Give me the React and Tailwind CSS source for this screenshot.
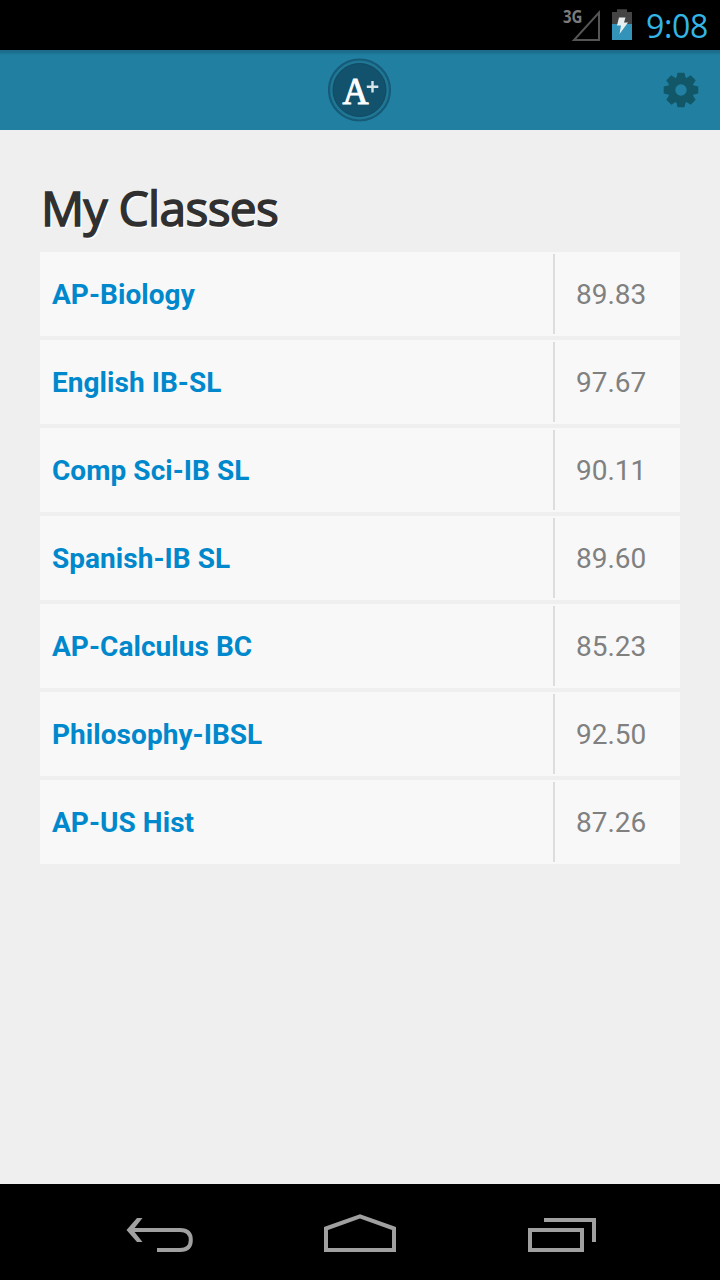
const classes = [
  { name: "AP-Biology", grade: "89.83" },
  { name: "English IB-SL", grade: "97.67" },
  { name: "Comp Sci-IB SL", grade: "90.11" },
  { name: "Spanish-IB SL", grade: "89.60" },
  { name: "AP-Calculus BC", grade: "85.23" },
  { name: "Philosophy-IBSL", grade: "92.50" },
  { name: "AP-US Hist", grade: "87.26" },
];

function StatusBar() {
  return (
    <div className="flex h-[50px] shrink-0 items-start justify-end bg-black">
      <svg className="mr-[10px] h-[50px] w-[40px]" viewBox="562 0 40 50">
        <text x="563" y="23" fontSize="17" fontWeight="700" fill="#7b7b7b" textLength="19.5" lengthAdjust="spacingAndGlyphs" fontFamily="Open Sans, sans-serif">3G</text>
        <path d="M574 40H599V12.500Z" fill="none" stroke="#555" strokeWidth="2" />
      </svg>
      <svg className="mr-[14px] h-[50px] w-[20px]" viewBox="612 0 20 50">
        <path d="M612 12h5V9.300h10V12h5v12h-20Z" fill="#444" />
        <path d="M612 24h20v16h-20Z" fill="#3393b8" />
        <path d="M619 17.500h6.500l-1.500 5h4L619.500 34l1.500-8.500h-4Z" fill="#e8eef0" />
      </svg>
      <div className="mr-[11px] h-[50px] w-[63px] whitespace-nowrap font-['Open_Sans',sans-serif] text-[32px] leading-[51px] tracking-[-0.3px] text-[#33b5e5]">9:08</div>
    </div>
  );
}

function Logo() {
  return (
    <svg className="col-start-2 size-[64px]" viewBox="0 0 64 64">
      <circle cx="31.500" cy="32" r="30.500" fill="#1f7795" stroke="#155b77" strokeWidth="2.200" />
      <circle cx="31.500" cy="32" r="26.500" fill="#12526d" stroke="#114a62" strokeWidth="1" />
      <text x="14.500" y="45.600" fontSize="37" fill="#fff" stroke="#fff" strokeWidth="1.100" textLength="26" lengthAdjust="spacingAndGlyphs" fontFamily="Liberation Serif, serif">A</text>
      <path d="M44.500 23v11.500M38.800 28.700h11.500" stroke="#d8e5ea" strokeWidth="2.400" />
    </svg>
  );
}

function Gear() {
  return (
    <svg className="col-start-3 mr-[21px] size-[36px] justify-self-end" viewBox="-18 -18 36 36">
      {[0, 45, 90, 135, 180, 225, 270, 315].map((a) => (
        <path key={a} d="M-5.200 -10L-3.500 -17.300H3.500L5.200 -10Z" fill="#125767" transform={`rotate(${a})`} />
      ))}
      <circle r="9.400" fill="none" stroke="#125767" strokeWidth="7.400" />
    </svg>
  );
}

function ClassRow({ name, grade }) {
  return (
    <li className="flex h-[84px] items-center bg-[#f8f8f8] font-['Roboto',sans-serif] text-[28px]">
      <span className="w-[513px] pt-0.5 pl-3 font-bold tracking-[0.05px] text-[#0088cc]">{name}</span>
      <span className="flex h-20 grow items-center border-l-2 border-[#dddddd] pt-0.5 pl-[21px] text-[#808080]">{grade}</span>
    </li>
  );
}

function NavBar() {
  return (
    <div className="flex h-24 shrink-0 items-start bg-black pt-[30px] pl-[126px]">
      <svg className="h-[40px] w-[68px]" viewBox="126 1214 68 40" fill="none" stroke="#a0a0a0" strokeWidth="4">
        <path d="M131 1230H180C188 1230 190.800 1234 190.800 1240C190.800 1246 188 1250 180 1250H157" />
        <path d="M137 1218h5.500L133 1230l9.500 12H137L126.500 1230Z" fill="#a0a0a0" stroke="none" />
      </svg>
      <svg className="ml-[130px] h-[40px] w-[72px]" viewBox="324 1214 72 40" fill="none" stroke="#a0a0a0" strokeWidth="4">
        <path d="M326 1228.500L360 1216.300L394 1228.500V1250H326Z" />
      </svg>
      <svg className="ml-[132px] h-[40px] w-[68px]" viewBox="528 1214 68 40" fill="none" stroke="#a0a0a0" strokeWidth="4">
        <path d="M544 1220h50v22M530 1230h52v20h-52Z" />
      </svg>
    </div>
  );
}

export default function App() {
  return (
    <div className="flex h-[1280px] w-[720px] flex-col overflow-hidden bg-[#efefef]">
      <StatusBar />
      <header className="grid h-20 shrink-0 grid-cols-[1fr_64px_1fr] items-center bg-gradient-to-b from-[#1c6d8d] from-[2px] to-[#2180a2] to-[5px]">
        <Logo />
        <Gear />
      </header>
      <main className="grow px-10 pt-[42px]">
        <h1 className="h-20 pl-px whitespace-nowrap font-['Open_Sans',sans-serif] text-[48px] leading-[72px] tracking-[-0.7px] text-[#303030] [-webkit-text-stroke:1.5px_#303030] [text-shadow:2px_2px_0_#fff]">My Classes</h1>
        <ul className="flex flex-col gap-1">
          {classes.map((c) => (
            <ClassRow key={c.name} {...c} />
          ))}
        </ul>
      </main>
      <NavBar />
    </div>
  );
}
